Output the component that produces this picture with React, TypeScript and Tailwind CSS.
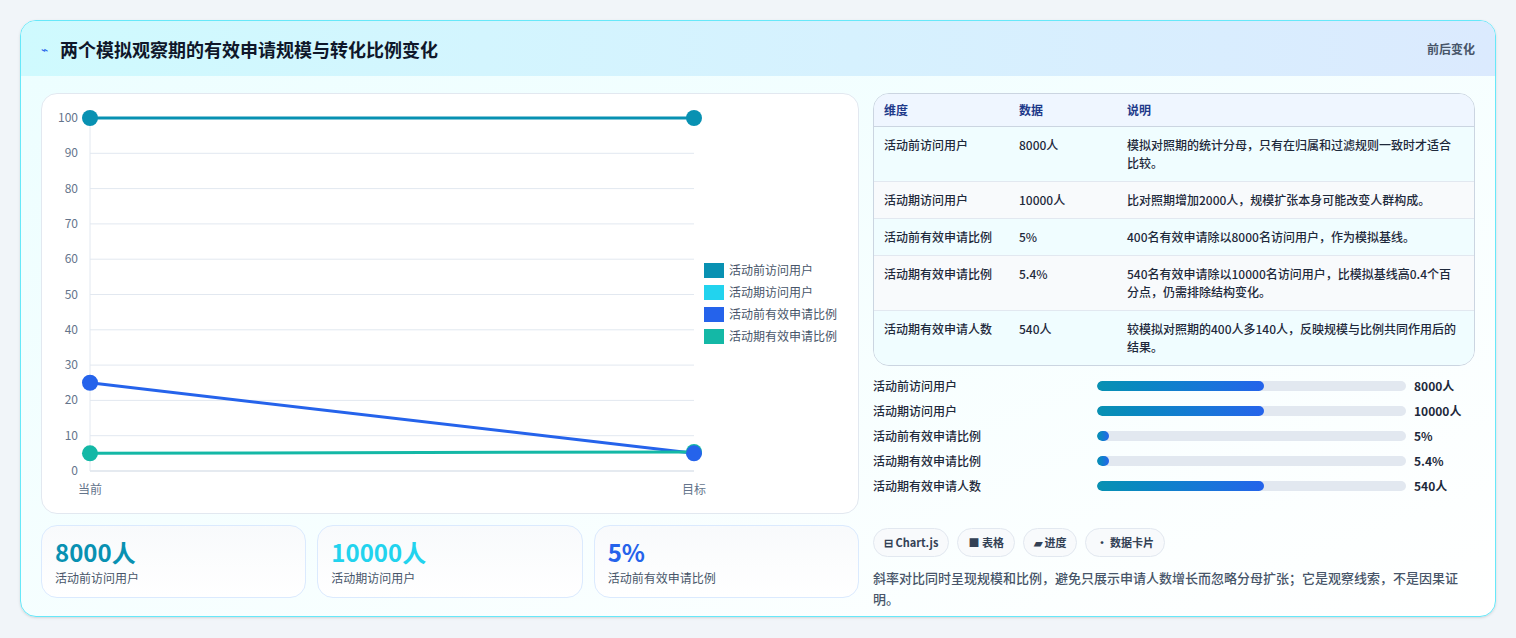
const font = { fontFamily: '"Noto Sans CJK SC", "Noto Sans", sans-serif' };

const legend = [
  { c: "#0891b2", t: "活动前访问用户" },
  { c: "#22d3ee", t: "活动期访问用户" },
  { c: "#2563eb", t: "活动前有效申请比例" },
  { c: "#14b8a6", t: "活动期有效申请比例" },
];

const rows = [
  ["活动前访问用户", "8000人", "模拟对照期的统计分母，只有在归属和过滤规则一致时才适合比较。"],
  ["活动期访问用户", "10000人", "比对照期增加2000人，规模扩张本身可能改变人群构成。"],
  ["活动前有效申请比例", "5%", "400名有效申请除以8000名访问用户，作为模拟基线。"],
  ["活动期有效申请比例", "5.4%", "540名有效申请除以10000名访问用户，比模拟基线高0.4个百分点，仍需排除结构变化。"],
  ["活动期有效申请人数", "540人", "较模拟对照期的400人多140人，反映规模与比例共同作用后的结果。"],
];

const bars = [
  ["活动前访问用户", 54, "8000人"],
  ["活动期访问用户", 54, "10000人"],
  ["活动前有效申请比例", 4, "5%"],
  ["活动期有效申请比例", 4, "5.4%"],
  ["活动期有效申请人数", 54, "540人"],
] as const;

function Chart() {
  const x0 = 48, x1 = 652;
  const y = (v: number) => 24 + (100 - v) * 3.53;
  const ticks = [0, 10, 20, 30, 40, 50, 60, 70, 80, 90, 100];
  return (
    <svg width="818" height="420" className="block">
      {ticks.map((t) => (
        <g key={t}>
          <line x1={x0} x2={x1} y1={y(t)} y2={y(t)} stroke={t === 0 ? "#cbd5e1" : "#e2e8f0"} />
          <text x={x0 - 12} y={y(t) + 4} textAnchor="end" fontSize="12" fill="#64748b">{t}</text>
        </g>
      ))}
      <line x1={x0} x2={x0} y1={y(100)} y2={y(0)} stroke="#e2e8f0" />
      <text x={x0} y={400} textAnchor="middle" fontSize="12" fill="#64748b">当前</text>
      <text x={x1} y={400} textAnchor="middle" fontSize="12" fill="#64748b">目标</text>
      <line x1={x0} x2={x1} y1={y(100)} y2={y(100)} stroke="#0891b2" strokeWidth="3" />
      <line x1={x0} x2={x1} y1={y(25)} y2={y(5)} stroke="#2563eb" strokeWidth="3" />
      <line x1={x0} x2={x1} y1={y(5)} y2={y(5.4)} stroke="#14b8a6" strokeWidth="3" />
      <circle cx={x0} cy={y(100)} r="8" fill="#0891b2" />
      <circle cx={x1} cy={y(100)} r="8" fill="#0891b2" />
      <circle cx={x0} cy={y(25)} r="8" fill="#2563eb" />
      <circle cx={x0} cy={y(5)} r="8" fill="#14b8a6" />
      <circle cx={x1} cy={y(5.4)} r="8" fill="#14b8a6" />
      <circle cx={x1} cy={y(5)} r="8" fill="#2563eb" />
      {legend.map((l, i) => (
        <g key={l.t}>
          <rect x={662} y={169 + i * 22} width="20" height="15" fill={l.c} />
          <text x={687} y={181 + i * 22} fontSize="12" fill="#475569">{l.t}</text>
        </g>
      ))}
    </svg>
  );
}

export default function App() {
  return (
    <div className="min-h-screen bg-[#f1f5f9] p-5 pb-0" style={font}>
      <div className="rounded-2xl border border-[#67e8f9] bg-gradient-to-br from-[#ecfeff] to-white overflow-hidden shadow-sm h-[597px]">
        <div className="flex items-center justify-between h-[55px] px-5 bg-gradient-to-r from-[#cffafe] to-[#dbeafe]">
          <div className="flex items-center gap-3">
            <span className="text-[#2563eb] text-xs">⌁</span>
            <h1 className="text-lg font-bold text-[#0f172a]">两个模拟观察期的有效申请规模与转化比例变化</h1>
          </div>
          <span className="text-xs font-semibold text-[#475569]">前后变化</span>
        </div>
        <div className="flex gap-[14px] px-5 pt-[17px]">
          <div className="w-[818px] flex flex-col gap-[11px]">
            <div className="h-[421px] rounded-2xl border border-[#e2e8f0] bg-white overflow-hidden">
              <Chart />
            </div>
            <div className="grid grid-cols-3 gap-[11px]">
              {[
                ["8000人", "text-[#0891b2]", "活动前访问用户"],
                ["10000人", "text-[#22d3ee]", "活动期访问用户"],
                ["5%", "text-[#2563eb]", "活动前有效申请比例"],
              ].map(([v, c, l]) => (
                <div key={l} className="h-[73px] rounded-2xl border border-[#dbeafe] bg-gradient-to-b from-[#f8fafc] to-white px-[13px] pt-[10px]">
                  <div className={`text-2xl font-bold ${c}`}>{v}</div>
                  <div className="text-xs text-[#475569] mt-[2px]">{l}</div>
                </div>
              ))}
            </div>
          </div>
          <div className="w-[604px] flex flex-col">
            <div className="rounded-2xl border border-[#cbd5e1] overflow-hidden text-xs">
              <div className="flex h-[33px] items-center bg-[#eff6ff] font-semibold text-[#1e3a8a] border-b border-[#cbd5e1]">
                <div className="w-[145px] pl-[10px]">维度</div>
                <div className="w-[108px]">数据</div>
                <div className="flex-1">说明</div>
              </div>
              {rows.map((r, i) => (
                <div key={r[0]} className={`flex py-[9px] text-[#1e293b] font-medium leading-[18px] ${i < 4 ? "border-b border-[#e2e8f0]" : ""} ${i % 2 ? "bg-[#f8fafc]" : "bg-[#f0fdff]"}`}>
                  <div className="w-[145px] pl-[10px]">{r[0]}</div>
                  <div className="w-[108px]">{r[1]}</div>
                  <div className="flex-1 pr-3">{r[2]}</div>
                </div>
              ))}
            </div>
            <div className="flex flex-col gap-[7px] mt-[11px]">
              {bars.map(([l, w, v]) => (
                <div key={l} className="flex items-center h-[18px] text-xs font-medium text-[#1e293b]">
                  <div className="w-[224px]">{l}</div>
                  <div className="w-[309px] h-[10px] rounded-full bg-[#e2e8f0] overflow-hidden">
                    <div className="h-full rounded-full bg-gradient-to-r from-[#0891b2] to-[#2563eb]" style={{ width: `${w}%` }} />
                  </div>
                  <div className="ml-2 font-bold">{v}</div>
                </div>
              ))}
            </div>
            <div className="flex gap-2 mt-[33px]">
              {["⊟ Chart.js", "■ 表格", "▰ 进度", "• 数据卡片"].map((c) => (
                <span key={c} className="rounded-full border border-[#e2e8f0] bg-[#f8fafc] px-[10px] h-[29px] flex items-center text-[11px] font-semibold text-[#334155]">{c}</span>
              ))}
            </div>
            <p className="mt-[10px] text-[13px] leading-[21px] text-[#475569] font-medium">
              斜率对比同时呈现规模和比例，避免只展示申请人数增长而忽略分母扩张；它是观察线索，不是因果证明。
            </p>
          </div>
        </div>
      </div>
    </div>
  );
}
